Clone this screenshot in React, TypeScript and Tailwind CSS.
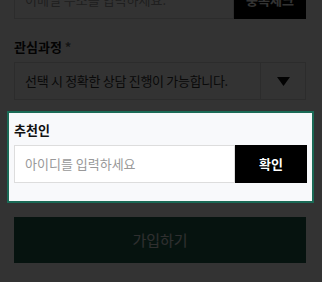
import React from "react";

const font = { fontFamily: '"Noto Sans CJK KR", "Noto Sans", sans-serif' };

function App() {
  return (
    <div className="relative w-[322px] h-[282px] overflow-hidden bg-white" style={font}>
      {/* 이메일 (scrolled partly out of view) */}
      <div className="flex mt-[-19px] pl-[14px] pr-[16px] h-[38px]">
        <div className="flex-1 flex items-center border border-[#dddddd] pl-[10px] text-[13px] text-[#999999]">
          이메일 주소를 입력하세요.
        </div>
        <button className="w-[72px] bg-black text-white text-[13px] font-bold">중복체크</button>
      </div>

      {/* 관심과정 */}
      <div className="pl-[14px] pr-[16px] pt-[18px]">
        <div className="text-[13px] font-bold leading-[19px] text-[#111111]">
          관심과정 <span className="text-[#666666]">*</span>
        </div>
        <div className="flex h-[38px] mt-[6px] border border-[#dddddd]">
          <div className="flex-1 flex items-center pl-[10px] text-[13px] tracking-[-0.3px] text-[#333333]">
            선택 시 정확한 상담 진행이 가능합니다.
          </div>
          <div className="w-[45px] flex items-center justify-center border-l border-[#dddddd]">
            <svg width="13" height="9" viewBox="0 0 13 9">
              <path d="M0 0 H13 L6.5 9 Z" fill="#111111" />
            </svg>
          </div>
        </div>
      </div>

      {/* 추천인 (highlighted) */}
      <div className="relative z-20 ml-[7px] mr-[8px] mt-[11px] border-2 border-[#1b6a56] bg-[#f8f9fb] px-[5px] pt-[7px] pb-[18px]">
        <div className="text-[13px] font-bold leading-[19px] text-[#111111]">추천인</div>
        <div className="flex h-[38px] mt-[6px]">
          <div className="flex-1 flex items-center bg-white border border-[#dddddd] pl-[10px] text-[13px] text-[#999999]">
            아이디를 입력하세요
          </div>
          <button className="w-[72px] bg-black text-white text-[13px] font-bold">확인</button>
        </div>
      </div>

      {/* 가입하기 */}
      <div className="pl-[14px] pr-[16px] mt-[14px]">
        <button className="w-full h-[46px] bg-[#1e5f4b] text-[#e8e8e8] text-[15px]">가입하기</button>
      </div>

      {/* dim overlay */}
      <div className="absolute inset-0 z-10 bg-black/80" />
    </div>
  );
}

export default App;
